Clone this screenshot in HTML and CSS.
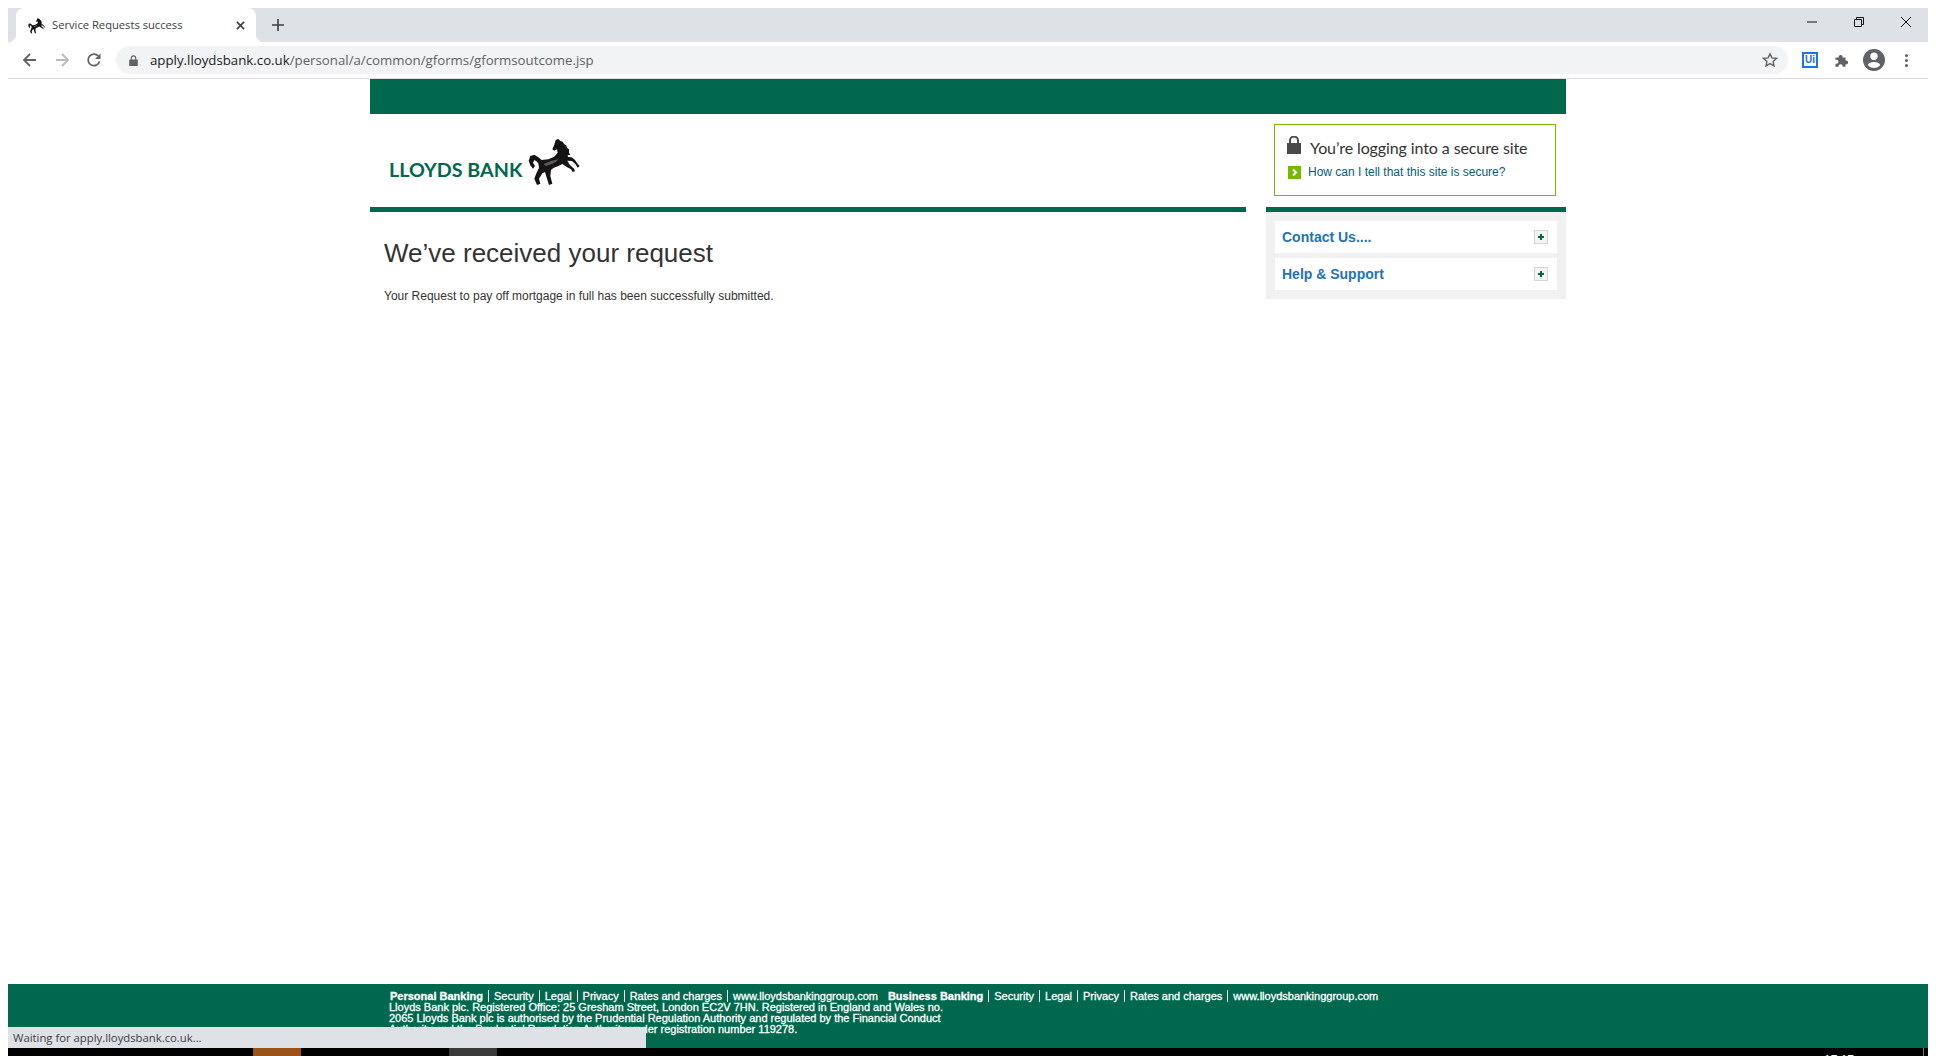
FILE: index.html

```html
<!DOCTYPE html>
<html lang="en">
<head>
  <meta charset="UTF-8" />
  <title>Service Requests success</title>
  <link rel="stylesheet" href="styles.css">
</head>
<body>
  <svg class="defs" width="0" height="0">
    <symbol id="horse" viewBox="0 0 180 150">
      <path d="M92 12L100 9L106 15L113 17L118 25L124 28L126 36L132 40L132 50L136 56L128 58L129 63L140 64L150 72L158 84L164 90L158 95L151 84L141 75L127 74L134 86L147 98L150 106L143 108L138 100L124 92L112 84L100 90L85 96L78 102L76 120L82 143L72 147L66 128L60 108L52 112L42 128L46 143L36 147L28 128L34 112L42 96L40 82L34 76L28 72L24 80L30 90L24 98L16 88L11 74L16 60L28 56L40 64L50 72L70 70L88 62L98 50L96 40L88 44L82 40L88 26Z"/>
      <path fill="#5c5c5c" d="M56 84Q78 74 100 70Q92 82 62 90Z"/>
    </symbol>
  </svg>

  <div class="tabstrip">
    <div class="tab">
      <svg class="favicon"><use href="#horse"/></svg>
      <span class="tab-title">Service Requests success</span>
      <svg class="tab-close" viewBox="0 0 10 10"><path d="M1 1l8 8M9 1l-8 8"/></svg>
    </div>
    <svg class="new-tab" viewBox="0 0 12 12"><path d="M6 0v12M0 6h12"/></svg>
    <div class="win-btns">
      <svg viewBox="0 0 12 12"><path d="M1 6h10"/></svg>
      <svg viewBox="0 0 12 12"><path d="M1.5 3.500h7v7h-7zM3.500 3.500v-2h7v7h-2"/></svg>
      <svg viewBox="0 0 12 12"><path d="M1 1l10 10M11 1l-10 10"/></svg>
    </div>
  </div>

  <div class="toolbar">
    <svg class="nav" viewBox="0 0 16 16"><path d="M14 8H2.500M8 2L2 8l6 6"/></svg>
    <svg class="nav faded" viewBox="0 0 16 16"><path d="M2 8h11.500M8 2l6 6-6 6"/></svg>
    <svg class="nav" viewBox="0 0 16 16"><path d="M13.500 9.500A5.800 5.800 0 1 1 12.300 4"/><path class="solid" d="M14.500 1.500v5.500H9z"/></svg>
    <div class="omnibox">
      <svg class="lock-small" viewBox="0 0 10 12"><path d="M1 5h8a.8.8 0 0 1 .8.800v5.400a.8.8 0 0 1-.8.800H1a.8.8 0 0 1-.8-.8V5.800A.8.8 0 0 1 1 5zM2 5V3.300a3 3 0 0 1 6 0V5H6.800V3.300a1.800 1.800 0 0 0-3.600 0V5z"/></svg>
      <span class="url"><b>apply.lloydsbank.co.uk</b>/personal/a/common/gforms/gformsoutcome.jsp</span>
      <svg class="star" viewBox="0 0 16 16"><path d="M8 1.800l1.900 4.100 4.500.5-3.300 3 .9 4.400L8 11.600l-4 2.200.9-4.400-3.300-3 4.500-.5z"/></svg>
    </div>
    <span class="ui-ext">Ui</span>
    <svg class="puzzle" viewBox="0 0 16 16"><path d="M1.500 5.500h3.200a2 2 0 1 1 3.800 0h3v3a2 2 0 1 1 0 3.800v2.500h-3a2 2 0 1 0-3.800 0H1.500v-3.300a2 2 0 1 0 0-3.600z"/></svg>
    <svg class="avatar" viewBox="0 0 22 22"><path fill-rule="evenodd" d="M11 0a11 11 0 1 1 0 22a11 11 0 0 1 0-22zM11 3.500a3.700 3.700 0 1 0 0 7.400a3.700 3.700 0 0 0 0-7.400zM11 13c-2.800 0-5.600 1.200-6.300 3a8 8 0 0 0 12.600 0c-.7-1.800-3.500-3-6.300-3z"/></svg>
    <div class="dots"><i></i><i></i><i></i></div>
  </div>

  <div class="page">
    <div class="wrap">
      <div class="top-band"></div>
      <div class="columns">
        <div class="main">
          <div class="logo">
            <span class="wordmark">LLOYDS BANK</span>
            <svg class="horse"><use href="#horse"/></svg>
          </div>
          <h1>We’ve received your request</h1>
          <p>Your Request to pay off mortgage in full has been successfully submitted.</p>
        </div>
        <div class="side">
          <div class="secure">
            <div class="secure-head">
              <svg class="padlock" viewBox="0 0 14 18"><path d="M0 7h2V4.500a5 5 0 0 1 10 0V7h2v11H0zM4 7h6V4.500a3 3 0 0 0-6 0z"/></svg>
              <span>You’re logging into a secure site</span>
            </div>
            <div class="secure-link">
              <span class="chev"><svg viewBox="0 0 13 13"><path d="M5 3.500L8 6.500 5 9.500"/></svg></span>
              <a>How can I tell that this site is secure?</a>
            </div>
          </div>
          <div class="panel">
            <div class="panel-row"><a>Contact Us....</a><span class="plus"></span></div>
            <div class="panel-row"><a>Help &amp; Support</a><span class="plus"></span></div>
          </div>
        </div>
      </div>
    </div>
  </div>

  <div class="footer">
    <div class="foot-links">
      <div class="foot-group"><b>Personal Banking</b><a>Security</a><a>Legal</a><a>Privacy</a><a>Rates and charges</a><a>www.lloydsbankinggroup.com</a></div>
      <div class="foot-group"><b>Business Banking</b><a>Security</a><a>Legal</a><a>Privacy</a><a>Rates and charges</a><a>www.lloydsbankinggroup.com</a></div>
    </div>
    <div class="foot-text">Lloyds Bank plc. Registered Office: 25 Gresham Street, London EC2V 7HN. Registered in England and Wales no.<br>2065 Lloyds Bank plc is authorised by the Prudential Regulation Authority and regulated by the Financial Conduct<br>Authority and the Prudential Regulation Authority under registration number 119278.</div>
    <div class="status">Waiting for apply.lloydsbank.co.uk...</div>
  </div>

  <div class="taskbar">
    <span class="task orange"></span>
    <span class="task grey"></span>
    <span class="clock">17:17</span>
    <span class="desk-edge"></span>
  </div>
</body>
</html>
```

FILE: styles.css

```css
html, body {
  height: 100%;
}
body {
  margin: 0;
  padding: 8px 8px 0;
  box-sizing: border-box;
  height: 1056px;
  overflow: hidden;
  display: flex;
  flex-direction: column;
  background: #fff;
  font-family: "Liberation Sans", Arial, sans-serif;
  color: #333;
}
.defs {
  position: absolute;
}

/* browser chrome */
.tabstrip {
  height: 34px;
  flex: none;
  display: flex;
  align-items: center;
  background: #dee1e6;
  padding-left: 8px;
}
.tab {
  position: relative;
  width: 240px;
  height: 34px;
  box-sizing: border-box;
  background: #fff;
  border-radius: 8px 8px 0 0;
  display: flex;
  align-items: center;
  padding: 0 0 0 11px;
}
.tab::before, .tab::after {
  content: "";
  position: absolute;
  bottom: 0;
  width: 8px;
  height: 8px;
}
.tab::before {
  left: -8px;
  background: radial-gradient(circle at 0 0, #dee1e6 8px, #fff 8.500px);
}
.tab::after {
  right: -8px;
  background: radial-gradient(circle at 100% 0, #dee1e6 8px, #fff 8.500px);
}
.favicon {
  width: 20px;
  height: 17px;
  fill: #111;
  flex: none;
}
.tab-title {
  margin-left: 5px;
  padding-bottom: 2px;
  width: 171px;
  font: 11.200px "Open Sans", sans-serif;
  color: #3c4043;
  white-space: nowrap;
}
.tab-close {
  width: 9px;
  height: 9px;
  margin-left: 13px;
  fill: none;
  stroke: #3c4043;
  stroke-width: 1.800;
}
.new-tab {
  width: 12px;
  height: 12px;
  margin-left: 16px;
  fill: none;
  stroke: #3c4043;
  stroke-width: 1.600;
}
.win-btns {
  margin-left: auto;
  display: flex;
  gap: 35px;
  padding: 0 16px 6px 0;
}
.win-btns svg {
  width: 12px;
  height: 12px;
  fill: none;
  stroke: #111;
  stroke-width: 1;
}
.toolbar {
  height: 36px;
  flex: none;
  display: flex;
  align-items: center;
  border-bottom: 1px solid #dadce0;
  padding: 0 0 0 14px;
}
.nav {
  width: 16px;
  height: 16px;
  margin-right: 16px;
  fill: none;
  stroke: #5f6368;
  stroke-width: 1.800;
}
.nav.faded {
  stroke: #b9bbbe;
}
.nav .solid {
  fill: #5f6368;
  stroke: none;
}
.omnibox {
  margin-left: -2px;
  width: 1672px;
  height: 28px;
  background: #f1f3f4;
  border-radius: 14px;
  display: flex;
  align-items: center;
  padding-left: 13px;
  box-sizing: border-box;
}
.lock-small {
  width: 9px;
  height: 11px;
  fill: #5f6368;
}
.url {
  margin-left: 12px;
  font: 13.250px "Open Sans", sans-serif;
  color: #5f6368;
}
.url b {
  font-weight: 400;
  color: #202124;
}
.star {
  margin-left: auto;
  margin-right: 10px;
  width: 16px;
  height: 16px;
  fill: none;
  stroke: #5f6368;
  stroke-width: 1.400;
}
.ui-ext {
  margin-left: 14px;
  width: 12px;
  height: 12px;
  border: 2px solid #1a73e8;
  background: #fff;
  color: #1a6fd8;
  font: bold 10px/12px "Liberation Sans", sans-serif;
  text-align: center;
}
.puzzle {
  width: 16px;
  height: 16px;
  margin-left: 16px;
  fill: #5f6368;
}
.avatar {
  width: 22px;
  height: 22px;
  margin-left: 13px;
  fill: #5f6368;
}
.dots {
  margin-left: 20px;
  display: flex;
  flex-direction: column;
  gap: 2px;
}
.dots i {
  width: 3px;
  height: 3px;
  border-radius: 50%;
  background: #5f6368;
}

/* page */
.page {
  flex: 1;
  min-height: 0;
}
.wrap {
  width: 1196px;
  margin-left: 362px;
}
.top-band {
  height: 35px;
  background: #00694d;
}
.columns {
  display: flex;
  justify-content: space-between;
}
.main {
  width: 876px;
}
.logo {
  height: 98px;
  box-sizing: border-box;
  border-bottom: 5px solid #00694d;
  display: flex;
  align-items: flex-start;
  padding: 22px 0 0 19px;
}
.wordmark {
  margin-top: 23px;
  font: 700 19.700px/22px Lato, sans-serif;
  color: #00694d;
  white-space: nowrap;
}
.horse {
  width: 60px;
  height: 50px;
  margin-left: 3px;
  fill: #151313;
}
h1 {
  margin: 26px 0 0 14px;
  font: 400 26px/30px "Liberation Sans", Arial, sans-serif;
  color: #333;
}
p {
  margin: 20px 0 0 14px;
  font-size: 12px;
  line-height: 16px;
  color: #333;
}
.side {
  width: 300px;
}
.secure {
  box-sizing: border-box;
  width: 282px;
  height: 72px;
  margin: 10px 0 11px 8px;
  border: 1px solid #76b900;
  padding: 11px 12px 0 12px;
}
.secure-head {
  display: flex;
  align-items: flex-end;
  font: 16px/18px Lato, sans-serif;
  letter-spacing: -0.1px;
  color: #333;
  white-space: nowrap;
}
.secure-head span {
  margin-bottom: -3px;
}
.padlock {
  width: 14px;
  height: 18px;
  margin-right: 9px;
  fill: #4a4a4a;
}
.secure-link {
  display: flex;
  align-items: center;
  margin-top: 11px;
  font-size: 12px;
  color: #00607a;
}
.chev {
  width: 13px;
  height: 13px;
  margin: 0 7px 0 1px;
  background: #76b900;
}
.chev svg {
  display: block;
  fill: none;
  stroke: #fff;
  stroke-width: 2;
}
.panel {
  border-top: 5px solid #00694d;
  background: #f1f1f1;
  padding: 9px;
  display: flex;
  flex-direction: column;
  gap: 5px;
}
.panel-row {
  height: 32px;
  background: #fff;
  display: flex;
  align-items: center;
  justify-content: space-between;
  padding: 0 9px 0 7px;
  font-size: 14px;
  font-weight: bold;
  color: #1f73b7;
}
.plus {
  position: relative;
  width: 12px;
  height: 12px;
  border: 1px solid #d4d4d4;
  background: #f4f4f4;
}
.plus::before, .plus::after {
  content: "";
  position: absolute;
  background: #00694d;
}
.plus::before {
  left: 3px;
  top: 5px;
  width: 6px;
  height: 2px;
}
.plus::after {
  left: 5px;
  top: 3px;
  width: 2px;
  height: 6px;
}

/* footer + status bubble */
.footer {
  position: relative;
  height: 64px;
  flex: none;
  background: #00694d;
  color: #fff;
  box-sizing: border-box;
  padding: 7px 0 0 381px;
  font-size: 11px;
  line-height: 11px;
  white-space: nowrap;
  -webkit-text-stroke: 0.3px #fff;
}
.foot-links {
  display: flex;
  gap: 10px;
  margin-left: 1px;
}
.foot-group a {
  margin-left: 5px;
  padding-left: 5px;
  border-left: 1px solid #fff;
}
.status {
  position: absolute;
  left: 0;
  bottom: 0;
  width: 638px;
  height: 21px;
  background: #dee1e6;
  color: #3c4043;
  font: 11.300px/21px "Open Sans", sans-serif;
  padding-left: 5px;
  box-sizing: border-box;
  -webkit-text-stroke: 0;
}
.taskbar {
  height: 8px;
  flex: none;
  background: #000;
  display: flex;
  overflow: hidden;
}
.task {
  width: 48px;
  height: 8px;
}
.orange {
  margin-left: 245px;
  background: #9a5218;
}
.grey {
  margin-left: 148px;
  background: #3a3a3a;
}
.clock {
  margin-left: auto;
  margin-top: 6px;
  margin-right: 69px;
  color: #fff;
  font-size: 12px;
  line-height: 12px;
}
.desk-edge {
  width: 1px;
  background: #777;
  margin-right: 4px;
}
```
